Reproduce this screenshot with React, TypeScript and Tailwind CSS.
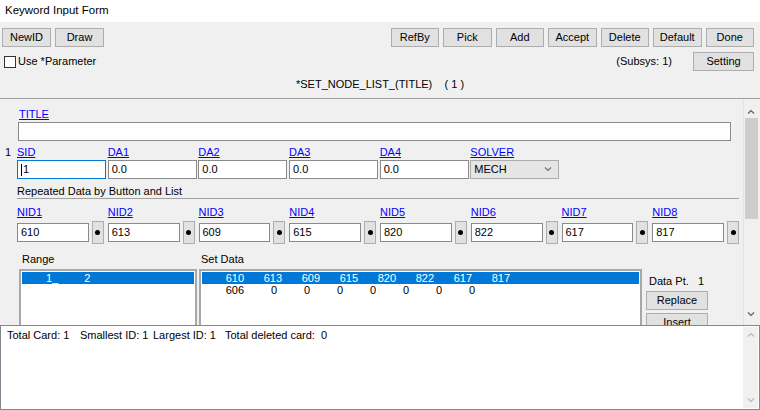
import React from "react";

const leftButtons = ["NewID", "Draw"];
const rightButtons = ["RefBy", "Pick", "Add", "Accept", "Delete", "Default", "Done"];
const topFields = [
  { label: "SID", value: "1" },
  { label: "DA1", value: "0.0" },
  { label: "DA2", value: "0.0" },
  { label: "DA3", value: "0.0" },
  { label: "DA4", value: "0.0" },
];
const nids = [
  { label: "NID1", value: "610" },
  { label: "NID2", value: "613" },
  { label: "NID3", value: "609" },
  { label: "NID4", value: "615" },
  { label: "NID5", value: "820" },
  { label: "NID6", value: "822" },
  { label: "NID7", value: "617" },
  { label: "NID8", value: "817" },
];
const row1 = ["610", "613", "609", "615", "820", "822", "617", "817"];
const row2 = ["606", "0", "0", "0", "0", "0", "0", "0"];

const Btn = ({ label, className = "" }: { label: string; className?: string }) => (
  <button
    className={`h-[19px] bg-[#e1e1e1] border border-[#adadad] text-[11px] leading-none text-black ${className}`}
  >
    {label}
  </button>
);

const Chevron = ({ up, color = "#606060" }: { up?: boolean; color?: string }) => (
  <svg width="8" height="5" viewBox="0 0 8 5">
    <polyline
      points={up ? "1,4.5 4,1.5 7,4.5" : "1,0.5 4,3.5 7,0.5"}
      fill="none"
      stroke={color}
      strokeWidth="1.2"
    />
  </svg>
);

const LinkLabel = ({ text }: { text: string }) => (
  <span className="text-[#0000ff] underline leading-[14px] h-[14px] block">{text}</span>
);

export default function App() {
  return (
    <div className="w-[760px] h-[410px] bg-[#f0f0f0] flex flex-col overflow-hidden text-[11px] text-black font-['Liberation_Sans',Arial,sans-serif]">
      {/* title bar */}
      <div className="h-[22px] shrink-0 bg-white flex items-center pl-[5px] text-[11.5px]">
        Keyword Input Form
      </div>

      {/* toolbar */}
      <div className="flex justify-between pl-[2px] pr-[6px] mt-[6px]">
        <div className="flex gap-[4px]">
          {leftButtons.map((b) => (
            <Btn key={b} label={b} className="w-[49px]" />
          ))}
        </div>
        <div className="flex gap-[4px]">
          {rightButtons.map((b) => (
            <Btn key={b} label={b} className="w-[48.5px]" />
          ))}
        </div>
      </div>

      {/* options row */}
      <div className="flex items-center mt-[5px] pl-[4px] pr-[6px] h-[19px]">
        <span className="w-[12px] h-[12px] bg-white border border-[#333333] mr-[2px]" />
        <span>Use *Parameter</span>
        <span className="ml-auto mr-[21px]">(Subsys: 1)</span>
        <Btn label="Setting" className="w-[61px]" />
      </div>

      <div className="mt-[5px] h-[16px] leading-[16px] text-center whitespace-pre">
        {"*SET_NODE_LIST_(TITLE)    ( 1 )"}
      </div>

      {/* scroll area */}
      <div className="mt-[6px] border-t border-[#a0a0a0] h-[227px] shrink-0 flex overflow-hidden">
        <div className="flex-1 overflow-hidden">
          <div className="pl-[17px] pt-[8px]">
            <div className="pl-[2px]">
              <LinkLabel text="TITLE" />
            </div>
            <div className="ml-[1px] mt-[1px] w-[713px] h-[19px] bg-white border border-[#8a8a8a]" />

            <div className="flex mt-[4px] ml-[-17px]">
              <span className="w-[17px] pl-[5px] leading-[14px]">1</span>
              <div className="grid grid-cols-6 w-[544px]">
                {topFields.map((f) => (
                  <LinkLabel key={f.label} text={f.label} />
                ))}
                <LinkLabel text="SOLVER" />
              </div>
            </div>
            <div className="grid grid-cols-6 w-[544px] mt-[1px]">
              {topFields.map((f, i) => (
                <div
                  key={f.label}
                  className={`w-[89px] h-[19px] bg-white border flex items-center pl-[3px] ${
                    i === 0 ? "border-[#0078d7]" : "border-[#8a8a8a]"
                  }`}
                >
                  {i === 0 && <span className="w-px h-[12px] bg-black mr-[1px]" />}
                  {f.value}
                </div>
              ))}
              <div className="w-[89px] h-[19px] bg-[#e5e5e5] border border-[#acacac] flex items-center pl-[3px] pr-[6px] justify-between">
                <span>MECH</span>
                <Chevron color="#707070" />
              </div>
            </div>

            <div className="mt-[5px] h-[15px] w-[722px] border-b border-[#a0a0a0] leading-[14px]">
              Repeated Data by Button and List
            </div>

            <div className="grid grid-cols-8 w-[726px] mt-[6px]">
              {nids.map((n) => (
                <LinkLabel key={n.label} text={n.label} />
              ))}
            </div>
            <div className="grid grid-cols-8 w-[726px] mt-[2px]">
              {nids.map((n) => (
                <div key={n.label} className="flex items-center pr-[4px] h-[23px]">
                  <div className="flex-1 h-[19px] bg-white border border-[#8a8a8a] flex items-center pl-[3px]">
                    {n.value}
                  </div>
                  <div className="ml-[3px] w-[12px] h-[23px] bg-[#e1e1e1] border border-[#adadad] flex items-center justify-center">
                    <span className="w-[5px] h-[5px] rounded-full bg-black" />
                  </div>
                </div>
              ))}
            </div>

            <div className="flex mt-[8px] leading-[14px]">
              <span className="ml-[5px] w-[179px]">Range</span>
              <span>Set Data</span>
            </div>

            <div className="flex mt-[3px]">
              <div className="ml-[2px] w-[178px] h-[90px] bg-white border-2 border-[#a8a8a8] p-px">
                <div className="h-[12px] bg-[#0078d7] text-white leading-[12px] flex">
                  <span className="ml-[24px]">1_</span>
                  <span className="ml-[26px]">2</span>
                </div>
              </div>
              <div className="ml-[2px] w-[443px] h-[90px] bg-white border-2 border-[#a8a8a8] p-px">
                <div className="h-[12px] bg-[#0078d7] text-white leading-[12px] flex">
                  {row1.map((v, i) => (
                    <span key={i} className={`text-right ${i === 0 ? "w-[42px]" : "w-[38px]"}`}>
                      {v}
                    </span>
                  ))}
                </div>
                <div className="h-[13px] leading-[13px] flex">
                  {row2.map((v, i) => (
                    <span key={i} className={`text-right ${i === 0 ? "w-[42px]" : "w-[33px]"}`}>
                      {v}
                    </span>
                  ))}
                </div>
              </div>
              <div className="ml-[4px] w-[62px] flex flex-col">
                <div className="mt-[5px] h-[14px] leading-[14px] pl-[3px] whitespace-pre">
                  {"Data Pt.   1"}
                </div>
                <Btn label="Replace" className="mt-[3px] w-[62px]" />
                <Btn label="Insert" className="mt-[3px] w-[62px]" />
              </div>
            </div>
          </div>
        </div>

        {/* vertical scrollbar */}
        <div className="w-[15px] mr-[2px] flex flex-col items-center border-l border-[#e2e2e2] pt-[6px]">
          <div className="h-[13px] flex items-center">
            <Chevron up />
          </div>
          <div className="w-[13px] h-[101px] bg-[#cdcdcd]" />
          <div className="mt-auto h-[18px] flex items-center pb-[3px]">
            <Chevron />
          </div>
        </div>
      </div>

      {/* bottom panel */}
      <div className="flex-1 border border-[#828790] bg-white flex">
        <div className="flex-1 pl-[6px] pt-[2px] leading-[14px] flex items-start">
          <span className="w-[73px]">Total Card: 1</span>
          <span className="w-[73px]">Smallest ID: 1</span>
          <span className="w-[72px]">Largest ID: 1</span>
          <span className="whitespace-pre">{"Total deleted card:  0"}</span>
        </div>
        <div className="w-[15px] mr-px my-px bg-[#f0f0f0] flex flex-col items-center justify-between py-[5px]">
          <Chevron up color="#b8b8b8" />
          <Chevron color="#b8b8b8" />
        </div>
      </div>
    </div>
  );
}
